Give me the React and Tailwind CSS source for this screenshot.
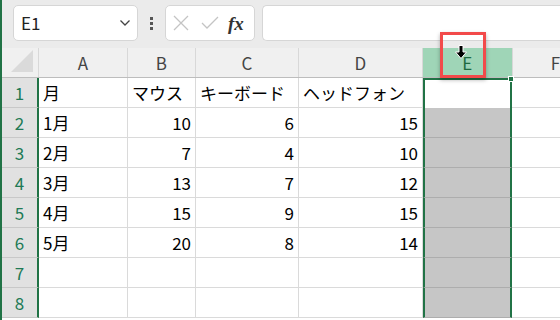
import React from "react";

const font = { fontFamily: '"Noto Sans CJK JP", "Noto Sans", sans-serif' };

const cols = [
  { key: "A", w: "w-[89px]" },
  { key: "B", w: "w-[68px]" },
  { key: "C", w: "w-[103px]" },
  { key: "D", w: "w-[124px]" },
];

const rows = [
  ["月", "マウス", "キーボード", "ヘッドフォン"],
  ["1月", 10, 6, 15],
  ["2月", 7, 4, 10],
  ["3月", 13, 7, 12],
  ["4月", 15, 9, 15],
  ["5月", 20, 8, 14],
  ["", "", "", ""],
  ["", "", "", ""],
];

function Toolbar() {
  return (
    <div className="h-[48px] bg-[#ebebeb] flex items-start pt-[5px] pl-[11px]">
      <div className="w-[125px] h-[36px] bg-white border border-[#d6d6d6] rounded-[5px] flex items-center justify-between pl-[7px] pr-[6px]">
        <span className="text-[17px] text-[#222]" style={font}>E1</span>
        <svg width="12" height="8" viewBox="0 0 12 8">
          <path d="M1.5 1.5 L6 6 L10.5 1.5" fill="none" stroke="#444" strokeWidth="1.3" />
        </svg>
      </div>
      <div className="w-[27px] h-[36px] flex flex-col items-center justify-center gap-[2px]">
        <span className="w-[3px] h-[3px] bg-[#555]" />
        <span className="w-[3px] h-[3px] bg-[#555]" />
        <span className="w-[3px] h-[3px] bg-[#555]" />
      </div>
      <div className="w-[90px] h-[36px] bg-white border border-[#d6d6d6] rounded-[5px] flex items-center pl-[6px]">
        <svg width="18" height="18" viewBox="0 0 18 18" className="mr-[10px]">
          <path d="M2 2 L16 16 M16 2 L2 16" stroke="#c4c4c4" strokeWidth="1.3" />
        </svg>
        <svg width="20" height="16" viewBox="0 0 20 16" className="mr-[8px]">
          <path d="M2 8 L7 13 L18 2" fill="none" stroke="#c4c4c4" strokeWidth="1.3" />
        </svg>
        <span
          className="text-[19px] italic font-bold text-[#333] leading-none"
          style={{ fontFamily: '"Liberation Serif", "DejaVu Serif", serif' }}
        >
          fx
        </span>
      </div>
      <div className="flex-1 h-[36px] bg-white border border-r-0 border-[#d6d6d6] rounded-l-[5px] ml-[7px]" />
    </div>
  );
}

function HeaderRow() {
  return (
    <div className="flex h-[30px] bg-[#f0f0f0] border-b border-[#bdbdbd]">
      <div className="w-[37px] border-r border-[#d8d8d8] relative">
        <svg width="24" height="24" viewBox="0 0 24 24" className="absolute right-[3px] bottom-[3px]">
          <path d="M22 0 L22 22 L0 22 Z" fill="#dadada" />
        </svg>
      </div>
      {cols.map((c) => (
        <div
          key={c.key}
          className={`${c.w} border-r border-[#d8d8d8] flex items-center justify-center text-[17px] text-[#444]`}
          style={font}
        >
          {c.key}
        </div>
      ))}
      <div className="w-[89px] bg-[#9fd5b7] flex items-center justify-center text-[17px] text-[#1d6b40]" style={font}>
        E
      </div>
      <div className="flex-1 border-l border-[#d8d8d8] flex items-center pl-[38px] text-[17px] text-[#444]" style={font}>
        F
      </div>
    </div>
  );
}

function DataRow({ idx, data }) {
  const first = idx === 0;
  return (
    <div className="flex h-[30px]">
      <div
        className="w-[37px] bg-[#e1e1e1] border-r-2 border-[#217346] border-b border-b-[#c8c8c8] flex items-center justify-center text-[17px] text-[#217a55]"
        style={font}
      >
        {idx + 1}
      </div>
      {cols.map((c, i) => (
        <div
          key={c.key}
          className={`${c.w} ${i === 0 ? "w-[88px]" : ""} border-r border-b border-[#dadada] flex items-center text-[17px] text-black ${
            i === 0 || first ? "justify-start pl-[4px]" : "justify-end pr-[4px]"
          }`}
          style={font}
        >
          {data[i]}
        </div>
      ))}
      <div
        className={`w-[89px] border-l-2 border-r-2 border-[#217346] ${
          first ? "bg-white border-t-2" : "bg-[#c6c6c6] border-b border-b-[#adadad]"
        }`}
      />
      <div className="flex-1 border-b border-[#dadada]" />
    </div>
  );
}

export default function App() {
  return (
    <div className="w-[560px] h-[320px] overflow-hidden bg-white relative border-l-2 border-[#217346]">
      <Toolbar />
      <HeaderRow />
      {rows.map((r, i) => (
        <DataRow key={i} idx={i} data={r} />
      ))}
      {/* fill handle */}
      <div className="absolute left-[506px] top-[76px] w-[6px] h-[6px] bg-[#217346] border border-white" />
      {/* red highlight box */}
      <div className="absolute left-[438px] top-[32px] w-[46px] h-[46px] border-[3px] border-[#f24a4a] shadow-[0_2px_4px_rgba(0,0,0,0.3)]" />
      {/* cursor */}
      <svg width="12" height="14" viewBox="0 0 12 14" className="absolute left-[453px] top-[45px]">
        <path d="M4 0.5 H8 V7 H11.5 L6 13.5 L0.5 7 H4 Z" fill="#000" stroke="#fff" strokeWidth="1" />
      </svg>
    </div>
  );
}
